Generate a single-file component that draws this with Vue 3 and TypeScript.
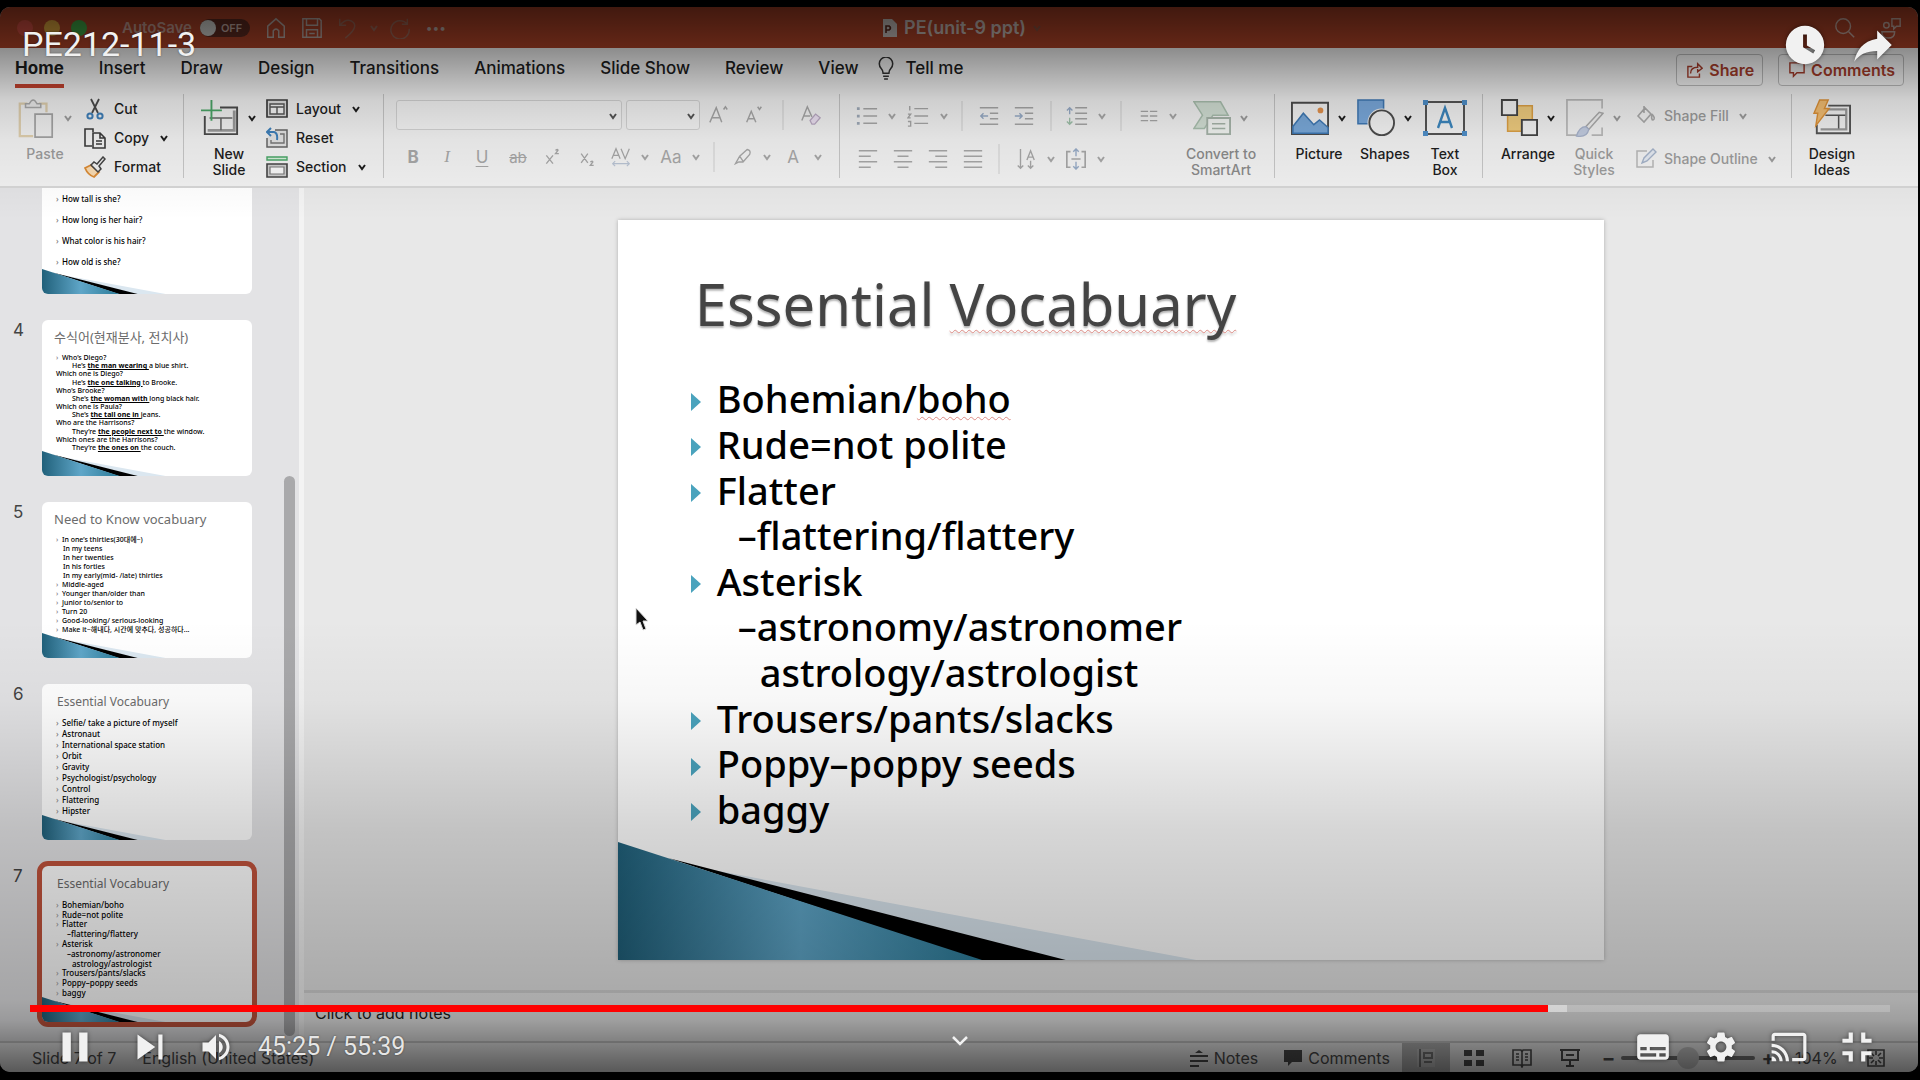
<script setup lang="ts">
import { ref, computed } from 'vue'

interface Cell { icon?: string; text?: string; cls?: string; w: number; label: string }
interface Row { t: string; b?: string; rest?: string; kind?: string }
interface Thumb { n: number; title?: string; size: string; rows: Row[] }

const tabs = ['Home', 'Insert', 'Draw', 'Design', 'Transitions', 'Animations', 'Slide Show', 'Review', 'View']

const fontTop: Cell[] = [
  { icon: 'grow', w: 36, label: 'Increase font size' },
  { icon: 'shrink', w: 34, label: 'Decrease font size' },
  { icon: 'bar', w: 24, label: '' },
  { icon: 'clear', w: 32, label: 'Clear formatting' },
]
const fontBottom: Cell[] = [
  { text: 'B', cls: 'bold', w: 34, label: 'Bold' },
  { text: 'I', cls: 'ital', w: 34, label: 'Italic' },
  { text: 'U', cls: 'under', w: 36, label: 'Underline' },
  { text: 'ab', cls: 'strike', w: 36, label: 'Strikethrough' },
  { icon: 'sup', w: 34, label: 'Superscript' },
  { icon: 'sub', w: 34, label: 'Subscript' },
  { icon: 'av', w: 34, label: 'Character spacing' },
  { icon: 'chev', w: 14, label: 'Spacing options' },
  { text: 'Aa', w: 38, label: 'Change case' },
  { icon: 'chev', w: 12, label: 'Case options' },
  { icon: 'bar', w: 24, label: '' },
  { icon: 'pen', w: 34, label: 'Highlight' },
  { icon: 'chev', w: 14, label: 'Highlight options' },
  { text: 'A', w: 38, label: 'Font color' },
  { icon: 'chev', w: 12, label: 'Color options' },
]
const paraTop: Cell[] = [
  { icon: 'bullets', w: 34, label: 'Bullets' },
  { icon: 'chev', w: 16, label: 'Bullet options' },
  { icon: 'numbers', w: 36, label: 'Numbering' },
  { icon: 'chev', w: 16, label: 'Numbering options' },
  { icon: 'bar', w: 20, label: '' },
  { icon: 'outdent', w: 34, label: 'Decrease indent' },
  { icon: 'indent', w: 36, label: 'Increase indent' },
  { icon: 'bar', w: 18, label: '' },
  { icon: 'spacing', w: 34, label: 'Line spacing' },
  { icon: 'chev', w: 16, label: 'Spacing options' },
  { icon: 'bar', w: 22, label: '' },
  { icon: 'columns', w: 34, label: 'Columns' },
  { icon: 'chev', w: 14, label: 'Column options' },
]
const paraBottom: Cell[] = [
  { icon: 'left', w: 35, label: 'Align left' },
  { icon: 'center', w: 35, label: 'Center' },
  { icon: 'right', w: 35, label: 'Align right' },
  { icon: 'justify', w: 35, label: 'Justify' },
  { icon: 'bar', w: 18, label: '' },
  { icon: 'textdir', w: 36, label: 'Text direction' },
  { icon: 'chev', w: 14, label: 'Direction options' },
  { icon: 'valign', w: 36, label: 'Align text' },
  { icon: 'chev', w: 14, label: 'Align options' },
]

const slideRows: Row[] = [
  { t: 'Bohemian/', b: 'boho' },
  { t: 'Rude=not polite' },
  { t: 'Flatter' },
  { t: '–flattering/flattery', kind: 'sub' },
  { t: 'Asterisk' },
  { t: '–astronomy/astronomer', kind: 'sub' },
  { t: 'astrology/astrologist', kind: 'deep' },
  { t: 'Trousers/pants/slacks' },
  { t: 'Poppy–poppy seeds' },
  { t: 'baggy' },
]

const thumbs: Thumb[] = [
  { n: 3, size: 'open', rows: [{ t: 'How tall is she?' }, { t: 'How long is her hair?' }, { t: 'What color is his hair?' }, { t: 'How old is she?' }] },
  {
    n: 4, title: '수식어(현재분사, 전치사)', size: 'tight', rows: [
      { t: 'Who’s Diego?' },
      { t: 'He’s ', b: 'the man wearing ', rest: 'a blue shirt.', kind: 'deep' },
      { t: 'Which one is Diego?', kind: 'flush' },
      { t: 'He’s ', b: 'the one talking ', rest: 'to Brooke.', kind: 'deep' },
      { t: 'Who’s Brooke?', kind: 'flush' },
      { t: 'She’s ', b: 'the woman with ', rest: 'long black hair.', kind: 'deep' },
      { t: 'Which one is Paula?', kind: 'flush' },
      { t: 'She’s ', b: 'the tall one in ', rest: 'jeans.', kind: 'deep' },
      { t: 'Who are the Harrisons?', kind: 'flush' },
      { t: 'They’re ', b: 'the people next to ', rest: 'the window.', kind: 'deep' },
      { t: 'Which ones are the Harrisons?', kind: 'flush' },
      { t: 'They’re ', b: 'the ones on ', rest: 'the couch.', kind: 'deep' },
    ],
  },
  {
    n: 5, title: 'Need to Know vocabuary', size: 'tight', rows: [
      { t: 'In one’s thirties(30대에~)' },
      { t: 'In my teens', kind: 'sub' },
      { t: 'In her twenties', kind: 'sub' },
      { t: 'In his forties', kind: 'sub' },
      { t: 'In my early(mid- /late) thirties', kind: 'sub' },
      { t: 'Middle-aged' },
      { t: 'Younger than/older than' },
      { t: 'Junior to/senior to' },
      { t: 'Turn 20' },
      { t: 'Good-looking/ serious-looking' },
      { t: 'Make it~해내다, 시간에 맞추다, 성공하다...' },
    ],
  },
  {
    n: 6, title: 'Essential Vocabuary', size: 'roomy', rows: [
      { t: 'Selfie/ take a picture of myself' }, { t: 'Astronaut' }, { t: 'International space station' },
      { t: 'Orbit' }, { t: 'Gravity' }, { t: 'Psychologist/psychology' }, { t: 'Control' }, { t: 'Flattering' }, { t: 'Hipster' },
    ],
  },
  {
    n: 7, title: 'Essential Vocabuary', size: 'roomy',
    rows: slideRows.map(r => ({ t: r.t + (r.b ?? ''), kind: r.kind === 'sub' ? 'dash' : r.kind })),
  },
]

const duration = 3339
const position = ref(2725)
const buffered = 2760
const zoom = ref(104)
const autosave = ref(false)
const current = ref(7)

const clock = (s: number) => `${Math.floor(s / 60)}:${String(s % 60).padStart(2, '0')}`
const track = computed(() => {
  const p = (position.value / duration) * 100
  const b = (buffered / duration) * 100
  return { background: `linear-gradient(90deg, #f00 ${p}%, rgba(255,255,255,.5) ${p}%, rgba(255,255,255,.5) ${b}%, rgba(255,255,255,.2) ${b}%)` }
})
</script>

<template>
  <svg class="defs" aria-hidden="true">
    <defs>
      <linearGradient id="blue" x1="0" x2="1">
        <stop offset="0" stop-color="#20607a" /><stop offset=".5" stop-color="#5fa6c8" /><stop offset="1" stop-color="#2c7b98" />
      </linearGradient>
    </defs>
    <symbol id="swoosh" viewBox="0 0 986 118" preserveAspectRatio="none">
      <path d="M90 27 580 118H440z" fill="#dbe7f0" /><path d="M50 16 449 118H360z" fill="#000" /><path d="M0 0 365 118H0z" fill="url(#blue)" />
    </symbol>
    <symbol id="chev" viewBox="0 0 10 10"><path d="M2 3l3 4 3-4" fill="none" stroke="currentColor" stroke-width="2" /></symbol>
    <symbol id="bar" viewBox="0 0 2 30"><path d="M1 0v30" stroke="#cfcfcf" stroke-width="1" /></symbol>
    <symbol id="grow" viewBox="0 0 24 24"><path d="M2 20 9 4l6 16M4 15h9M17 6l2-3 2 3" fill="none" stroke="currentColor" stroke-width="1.6" /></symbol>
    <symbol id="shrink" viewBox="0 0 24 24"><path d="M4 20 9 8l5 12M6 16h7M16 3l2 3 2-3" fill="none" stroke="currentColor" stroke-width="1.6" /></symbol>
    <symbol id="clear" viewBox="0 0 24 24"><path d="M2 18 8 3l5 11M4 13h7" fill="none" stroke="currentColor" stroke-width="1.6" /><path d="M11 18l6-7 5 4-6 7h-3z" fill="#eadff0" stroke="#b9a9c2" stroke-width="1.4" /></symbol>
    <symbol id="sup" viewBox="0 0 24 24"><path d="M4 10l8 10M12 10 4 20M15 4q3-2 3 0l-3 4h4" fill="none" stroke="currentColor" stroke-width="1.6" /></symbol>
    <symbol id="sub" viewBox="0 0 24 24"><path d="M5 8l8 11M13 8 5 19M16 18q3-2 3 0l-3 4h4" fill="none" stroke="currentColor" stroke-width="1.6" /></symbol>
    <symbol id="av" viewBox="0 0 24 24"><path d="M1 14 6 2l5 12M3 10h6M12 2l5 12 5-12" fill="none" stroke="currentColor" stroke-width="1.5" /><path d="M2 20h20M5 17l-3 3 3 3M19 17l3 3-3 3" fill="none" stroke="#b9c3d3" stroke-width="1.4" /></symbol>
    <symbol id="pen" viewBox="0 0 24 24"><path d="M3 20l5-9L17 3q5 1 3 6l-8 9H7zM8 11l4 6" fill="none" stroke="currentColor" stroke-width="1.6" /></symbol>
    <symbol id="bullets" viewBox="0 0 24 24"><path d="M8 4h15M8 12h15M8 20h15" stroke="currentColor" stroke-width="1.6" /><path d="M1 4h3M1 12h3M1 20h3" stroke="#9faab8" stroke-width="3" /></symbol>
    <symbol id="numbers" viewBox="0 0 24 24"><path d="M8 4h15M8 12h15M8 20h15M3 1v5M1 10h3l-3 4h3M1 18h3v5H1" fill="none" stroke="currentColor" stroke-width="1.5" /></symbol>
    <symbol id="outdent" viewBox="0 0 24 24"><path d="M2 3h20M13 9h9M13 15h9M2 21h20" stroke="currentColor" stroke-width="1.6" /><path d="M11 12H3M6 9l-3 3 3 3" fill="none" stroke="#96aac5" stroke-width="1.5" /></symbol>
    <symbol id="indent" viewBox="0 0 24 24"><path d="M2 3h20M13 9h9M13 15h9M2 21h20" stroke="currentColor" stroke-width="1.6" /><path d="M2 12h8M7 9l3 3-3 3" fill="none" stroke="#96aac5" stroke-width="1.5" /></symbol>
    <symbol id="spacing" viewBox="0 0 24 24"><path d="M10 3h13M10 9h13M10 15h13M10 21h13" stroke="currentColor" stroke-width="1.6" /><path d="M4 10V3M1 6l3-3 3 3" fill="none" stroke="#96aac5" stroke-width="1.5" /><path d="M4 14v7M1 18l3 3 3-3" fill="none" stroke="#9dbfa8" stroke-width="1.5" /></symbol>
    <symbol id="columns" viewBox="0 0 24 24"><path d="M3 7h8M13 7h8M3 12h8M13 12h8M3 17h8M13 17h8" stroke="currentColor" stroke-width="1.5" /></symbol>
    <symbol id="left" viewBox="0 0 24 24"><path d="M2 3h20M2 9h13M2 15h20M2 21h13" stroke="currentColor" stroke-width="1.8" /></symbol>
    <symbol id="center" viewBox="0 0 24 24"><path d="M2 3h20M6 9h12M2 15h20M6 21h12" stroke="currentColor" stroke-width="1.8" /></symbol>
    <symbol id="right" viewBox="0 0 24 24"><path d="M2 3h20M9 9h13M2 15h20M9 21h13" stroke="currentColor" stroke-width="1.8" /></symbol>
    <symbol id="justify" viewBox="0 0 24 24"><path d="M2 3h20M2 9h20M2 15h20M2 21h20" stroke="currentColor" stroke-width="1.8" /></symbol>
    <symbol id="textdir" viewBox="0 0 24 24"><path d="M6 1v21M3 19l3 3 3-3M17 14v8M14 19l3 3 3-3M13 13l4-10 4 10M14 10h6" fill="none" stroke="currentColor" stroke-width="1.5" /></symbol>
    <symbol id="valign" viewBox="0 0 24 24"><path d="M6 4H2v17h4M18 4h4v17h-4M7 12h10" fill="none" stroke="currentColor" stroke-width="1.8" /><path d="M12 1v8M9 4l3-3 3 3M12 15v8M9 20l3 3 3-3" fill="none" stroke="#96aac5" stroke-width="1.5" /></symbol>

    <symbol id="paste" viewBox="0 0 38 42"><path d="M10 6H2v34h14M22 6h8v9" fill="none" stroke="#dfcfae" stroke-width="2.4" /><path d="M8 10V6h4q4-8 8 0h4v4z" fill="#ececec" stroke="#aaa" stroke-width="1.6" /><path d="M18 17h18v24H18z" fill="#efefef" stroke="#a3a3a3" stroke-width="1.8" /></symbol>
    <symbol id="cut" viewBox="0 0 22 22"><path d="M7 1l7 14M15 1 8 15" stroke="#4a4a4a" stroke-width="1.8" /><g fill="none" stroke="#3f7fb8" stroke-width="2"><circle cx="6" cy="18" r="2.6" /><circle cx="16" cy="18" r="2.6" /></g></symbol>
    <symbol id="copy" viewBox="0 0 22 22"><path d="M8 19H1V2h8v3M9 6h7l5 5v10H9zM16 6v5h5M12 14h6M12 17h6" fill="none" stroke="#3a3a3a" stroke-width="1.6" /></symbol>
    <symbol id="brush" viewBox="0 0 22 22"><path d="M1 12l6-3 8 7-5 5q-6-2-9-9z" fill="#f7d9b0" stroke="#d98a35" stroke-width="1.8" /><path d="M7 9l3-3 3 2 6-7 2 2-6 7 2 3-3 3z" fill="#eee" stroke="#444" stroke-width="1.5" /></symbol>
    <symbol id="newslide" viewBox="0 0 40 40"><path d="M20 9h18v28H4V18" fill="none" stroke="#4b4b4b" stroke-width="2" /><path d="M7 33h28V12" fill="none" stroke="#9a9a9a" stroke-width="3" /><path d="M9 20h24M21 20v13" stroke="#666" stroke-width="1.6" /><path d="M11 1v22M0 12h22" stroke="#4aa567" stroke-width="2" /></symbol>
    <symbol id="layout" viewBox="0 0 22 22"><path d="M1 2h20v17H1z" fill="#dedede" stroke="#3d3d3d" stroke-width="1.7" /><path d="M4 6h14v10H4zM4 9h14M11 9v7" fill="#f5f5f5" stroke="#555" stroke-width="1.4" /></symbol>
    <symbol id="reset" viewBox="0 0 22 22"><path d="M9 3h12v17H1V11" fill="#e2e2e2" stroke="#666" stroke-width="1.5" /><path d="M14 7h4v9H5v-3" fill="none" stroke="#777" stroke-width="1.4" /><path d="M5 1 1 5l4 4M1 5h7q4 1 3 8" fill="none" stroke="#3f80ba" stroke-width="2" /></symbol>
    <symbol id="section" viewBox="0 0 22 22"><path d="M1 1h20v3H1z" fill="#d4ecd8" stroke="#4aa567" stroke-width="1.4" /><path d="M1 8h20v13H1z" fill="#ccc" stroke="#444" stroke-width="1.6" /><path d="M4 11h14v7H4z" fill="#f6f6f6" stroke="#777" stroke-width="1.2" /></symbol>
    <symbol id="smart" viewBox="0 0 40 40"><path d="M1 3h28l8 14H21l-9 14H1l9-14z" fill="#d2dfd4" stroke="#a9bfae" stroke-width="1.6" /><path d="M15 20h24v17H15z" fill="#f1f4f1" stroke="#a5b3a8" stroke-width="2" /><path d="M20 26h14M20 31h14" stroke="#a5b3a8" stroke-width="1.6" /></symbol>
    <symbol id="picture" viewBox="0 0 40 40"><path d="M1 4h38v33H1z" fill="#f4f4f4" stroke="#4c4c4c" stroke-width="2" /><path d="M2 29l11-14 11 12 6-5 9 8v6H2z" fill="#79a8d8" stroke="#3e78b3" stroke-width="1.6" /><circle cx="31" cy="12" r="3" fill="#e2914c" /></symbol>
    <symbol id="shapes" viewBox="0 0 40 40"><path d="M1 1h27v25H1z" fill="#7aa9dc" stroke="#3f78b4" stroke-width="1.6" /><circle cx="26" cy="25" r="15" fill="#eee" /><circle cx="26" cy="25" r="13" fill="#f4f4f4" stroke="#4c4c4c" stroke-width="2" /></symbol>
    <symbol id="textbox" viewBox="0 0 44 40"><path d="M3 4h38v32H3z" fill="#f4f4f4" stroke="#555" stroke-width="2" /><path d="M15 30l7-20 7 20M17 24h10" fill="none" stroke="#3c86bd" stroke-width="2.4" /><path d="M0 2h5v5H0zM39 2h5v5h-5zM0 33h5v5H0zM39 33h5v5h-5z" fill="#4f8fc9" /></symbol>
    <symbol id="arrange" viewBox="0 0 40 40"><path d="M8 7h26v27H8z" fill="#eecb7e" stroke="#dca045" stroke-width="1.6" /><path d="M2 1h16v16H2zM23 22h16v16H23z" fill="#f3f3f3" stroke="#444" stroke-width="2" /></symbol>
    <symbol id="quick" viewBox="0 0 40 40"><path d="M38 10V1H1v37h12M38 30v8H27" fill="none" stroke="#b9b9b9" stroke-width="1.8" /><path d="M39 15 24 32l-3-3 14-15z" fill="#eee" stroke="#aaa" stroke-width="1.6" /><path d="M21 29q-7 0-10 10 11 2 13-7z" fill="#c2cce0" stroke="#a8b3cb" stroke-width="1.4" /></symbol>
    <symbol id="ideas" viewBox="0 0 40 40"><path d="M16 7h23v29H4v-9" fill="none" stroke="#555" stroke-width="2" /><path d="M14 11h21v21H8" fill="none" stroke="#999" stroke-width="2.4" /><path d="M13 17h21M27 17v14" stroke="#555" stroke-width="1.6" /><path d="M7 1h9l-4 9h5L3 28l2-13H1z" fill="#f2bd72" stroke="#dc9138" stroke-width="1.5" /></symbol>
    <symbol id="fill" viewBox="0 0 22 22"><path d="M3 11l7-8 6 6-7 8zM9 1v7M17 9q4 5 1 6-2 0-1-6" fill="none" stroke="#aaa" stroke-width="1.6" /></symbol>
    <symbol id="outline" viewBox="0 0 22 22"><path d="M12 3H2v16h16v-7" fill="none" stroke="#b6b6b6" stroke-width="1.5" /><path d="M7 15l2-5 9-9 3 3-9 9z" fill="#e3e8f0" stroke="#a4b2c8" stroke-width="1.4" /></symbol>
  </svg>

  <main class="player">
    <div class="window">
      <header class="titlebar">
        <div class="tb-left">
          <i class="light red"></i><i class="light yellow"></i><i class="light green"></i>
          <label class="autosave"><span>AutoSave</span><input v-model="autosave" type="checkbox" /><span class="toggle"><i></i>OFF</span></label>
          <button class="tb" aria-label="Home"><svg viewBox="0 0 24 24"><path d="M3 10l9-8 9 8v12h-6v-7q-3-4-6 0v7H3z" /></svg></button>
          <button class="tb" aria-label="Save"><svg viewBox="0 0 24 24"><path d="M2 2h18l2 2v18H2zM6 2v7h12V2M6 22v-8h12v8M9 18h6" /></svg></button>
          <button class="tb dim" aria-label="Undo"><svg viewBox="0 0 24 24"><path d="M3 2v7h7M3 9q8-9 15-3 5 6-9 17" /></svg></button>
          <button class="tb thin dim" aria-label="Undo options"><svg class="s10"><use href="#chev" /></svg></button>
          <button class="tb dim" aria-label="Redo"><svg viewBox="0 0 24 24"><path d="M20 2v6h-6M20 8a10 10 0 1 0 2 5" /></svg></button>
          <button class="tb more" aria-label="More">•••</button>
        </div>
        <h1 class="doc">
          <svg viewBox="0 0 16 20"><path d="M1 1h9l5 5v13H1z" fill="#c9c1be" /><path d="M4 15V8h3q3 2 0 4H4" fill="none" stroke="#55251a" stroke-width="1.6" /></svg>
          PE(unit-9 ppt)
          <svg class="s10 faint"><use href="#chev" /></svg>
        </h1>
        <div class="tb-right">
          <button class="tb" aria-label="Search"><svg viewBox="0 0 24 24"><circle cx="10" cy="10" r="8" /><path d="M16 16l6 6" /></svg></button>
          <button class="tb" aria-label="Share status"><svg viewBox="0 0 24 24"><circle cx="7" cy="9" r="3" /><path d="M2 16h14q0 7-7 7t-7-7zM13 2h9v8h-4l-3 3v-3h-2z" /></svg></button>
        </div>
      </header>

      <nav class="tabs">
        <a v-for="t in tabs" :key="t" href="#" :class="{ active: t === 'Home' }">{{ t }}</a>
        <a href="#" class="tell"><svg viewBox="0 0 18 24"><path d="M6 17q0-3-2-5a7 7 0 1 1 10 0q-2 2-2 5zM6 20h6M7 23h4" fill="none" stroke="#333" stroke-width="1.6" /></svg>Tell me</a>
        <span class="grow"></span>
        <button class="pill"><svg viewBox="0 0 18 18"><path d="M6 5H1v12h13v-4M4 13q0-7 8-7V2l5 5-5 4V8" /></svg>Share</button>
        <button class="pill"><svg viewBox="0 0 18 18"><path d="M1 1h16v11h-8l-4 4v-4H1z" /></svg>Comments</button>
      </nav>

      <section class="tools" aria-label="Ribbon">
        <div class="group clip">
          <button class="big off"><span class="pic"><svg class="s38"><use href="#paste" /></svg><svg class="s10"><use href="#chev" /></svg></span>Paste</button>
          <div class="stack">
            <button><svg class="s22"><use href="#cut" /></svg>Cut</button>
            <button><svg class="s22"><use href="#copy" /></svg>Copy<svg class="s10"><use href="#chev" /></svg></button>
            <button><svg class="s22"><use href="#brush" /></svg>Format</button>
          </div>
        </div>
        <div class="group slides">
          <button class="big"><span class="pic"><svg class="s38"><use href="#newslide" /></svg><svg class="s10"><use href="#chev" /></svg></span>New<br />Slide</button>
          <div class="stack">
            <button><svg class="s22"><use href="#layout" /></svg>Layout<svg class="s10"><use href="#chev" /></svg></button>
            <button><svg class="s22"><use href="#reset" /></svg>Reset</button>
            <button><svg class="s22"><use href="#section" /></svg>Section<svg class="s10"><use href="#chev" /></svg></button>
          </div>
        </div>
        <div class="group font">
          <div class="strip">
            <span class="combo wide"><select aria-label="Font"><option></option></select><svg class="s10"><use href="#chev" /></svg></span>
            <span class="combo"><select aria-label="Font size"><option></option></select><svg class="s10"><use href="#chev" /></svg></span>
            <template v-for="(c, i) in fontTop" :key="i">
              <span v-if="c.icon === 'bar'" class="cell" :style="{ width: c.w + 'px' }"><svg class="bar"><use href="#bar" /></svg></span>
              <button v-else class="cell" :aria-label="c.label" :style="{ width: c.w + 'px' }"><svg class="s22"><use :href="'#' + c.icon" /></svg></button>
            </template>
          </div>
          <div class="strip">
            <template v-for="(c, i) in fontBottom" :key="i">
              <span v-if="c.icon === 'bar'" class="cell" :style="{ width: c.w + 'px' }"><svg class="bar"><use href="#bar" /></svg></span>
              <button v-else class="cell" :class="c.cls" :aria-label="c.label" :style="{ width: c.w + 'px' }">
                <template v-if="c.text">{{ c.text }}</template><svg v-else :class="c.icon === 'chev' ? 's10' : 's20'"><use :href="'#' + c.icon" /></svg>
              </button>
            </template>
          </div>
        </div>
        <div class="group para">
          <div class="strips">
            <div v-for="(row, r) in [paraTop, paraBottom]" :key="r" class="strip">
              <template v-for="(c, i) in row" :key="i">
                <span v-if="c.icon === 'bar'" class="cell" :style="{ width: c.w + 'px' }"><svg class="bar"><use href="#bar" /></svg></span>
                <button v-else class="cell" :aria-label="c.label" :style="{ width: c.w + 'px' }"><svg :class="c.icon === 'chev' ? 's10' : 's22'"><use :href="'#' + c.icon" /></svg></button>
              </template>
            </div>
          </div>
          <button class="big off dark"><span class="pic"><svg class="s38"><use href="#smart" /></svg><svg class="s10"><use href="#chev" /></svg></span>Convert to<br />SmartArt</button>
        </div>
        <div class="group insert">
          <button class="big"><span class="pic"><svg class="s38"><use href="#picture" /></svg><svg class="s10"><use href="#chev" /></svg></span>Picture</button>
          <button class="big"><span class="pic"><svg class="s38"><use href="#shapes" /></svg><svg class="s10"><use href="#chev" /></svg></span>Shapes</button>
          <button class="big slim"><span class="pic"><svg class="s42"><use href="#textbox" /></svg></span>Text<br />Box</button>
        </div>
        <div class="group arrange">
          <button class="big"><span class="pic"><svg class="s38"><use href="#arrange" /></svg><svg class="s10"><use href="#chev" /></svg></span>Arrange</button>
          <button class="big off"><span class="pic"><svg class="s38"><use href="#quick" /></svg><svg class="s10"><use href="#chev" /></svg></span>Quick<br />Styles</button>
          <div class="stack two off">
            <button><svg class="s22"><use href="#fill" /></svg>Shape Fill<svg class="s10"><use href="#chev" /></svg></button>
            <button><svg class="s22"><use href="#outline" /></svg>Shape Outline<svg class="s10"><use href="#chev" /></svg></button>
          </div>
        </div>
        <div class="group last">
          <button class="big"><span class="pic"><svg class="s38"><use href="#ideas" /></svg></span>Design<br />Ideas</button>
        </div>
      </section>

      <div class="body">
        <aside class="rail">
          <ol class="thumbs">
            <li v-for="t in thumbs" :key="t.n">
              <span class="num">{{ t.n === 3 ? '' : t.n }}</span>
              <article class="thumb" :class="[t.size, { sel: t.n === current }]" @click="current = t.n">
                <h3 v-if="t.title">{{ t.title }}</h3>
                <ul>
                  <li v-for="(r, i) in t.rows" :key="i" :class="r.kind ?? 'item'">{{ r.t }}<b v-if="r.b">{{ r.b }}</b>{{ r.rest }}</li>
                </ul>
                <svg class="swoosh"><use href="#swoosh" /></svg>
              </article>
            </li>
          </ol>
          <div class="scroll"><i></i></div>
        </aside>
        <div class="pane">
          <div class="stage">
            <article class="slide">
              <h2>Essential <span class="wavy">Vocabuary</span></h2>
              <ul>
                <li v-for="r in slideRows" :key="r.t" :class="r.kind"><svg v-if="!r.kind" viewBox="0 0 10 18"><path d="M0 0l10 9-10 9z" /></svg>{{ r.t }}<span v-if="r.b" class="wavy">{{ r.b }}</span></li>
              </ul>
              <svg class="swoosh"><use href="#swoosh" /></svg>
            </article>
            <svg class="cursor" viewBox="0 0 14 24"><path d="M1 1v17l4-3 3 8 3-1-3-8h5z" fill="#111" stroke="#ddd" stroke-width="1" /></svg>
          </div>
          <div class="notes">Click to add notes</div>
        </div>
      </div>

      <footer class="status">
        <span>Slide 7 of 7</span><span class="lang">English (United States)</span>
        <span class="grow"></span>
        <button class="st"><svg viewBox="0 0 18 18"><path d="M5 4l4-3 4 3zM0 6h18v2H0zM0 11h18v2H0zM0 16h9v2H0z" /></svg>Notes</button>
        <button class="st"><svg viewBox="0 0 18 18"><path d="M0 1h18v12H8l-4 4v-4H0z" /></svg>Comments</button>
        <div class="views">
          <button class="on" aria-label="Normal"><svg viewBox="0 0 20 20"><path d="M1 1h18v18H1z" fill="#c4c4c4" /><path d="M4 1v18M8 5h8v5H8zM8 14h8" fill="none" stroke="#777" stroke-width="2" /></svg></button>
          <button aria-label="Slide sorter"><svg viewBox="0 0 20 20"><path d="M0 2h8v6H0zM12 2h8v6h-8zM0 12h8v6H0zM12 12h8v6h-8z" /></svg></button>
          <button aria-label="Reading view"><svg viewBox="0 0 20 20"><path d="M1 2h8l1 2 1-2h8v15h-8l-1 2-1-2H1zM10 4v14M4 6h3M4 9h3M4 12h3M13 6h3M13 9h3M13 12h3" fill="none" stroke="currentColor" stroke-width="1.6" /></svg></button>
          <button aria-label="Slide show"><svg viewBox="0 0 20 20"><path d="M0 2h20M2 2v10h16V2M6 7h8M10 12v5M6 18h8" fill="none" stroke="currentColor" stroke-width="2" /></svg></button>
        </div>
        <label class="zoom"><span>−</span><input v-model="zoom" type="range" min="8" max="200" aria-label="Zoom" /><span>+</span></label>
        <output>{{ zoom }}%</output>
        <button class="fit" aria-label="Fit slide"><svg viewBox="0 0 18 18"><path d="M1 1h16v16H1zM9 2v4M9 12v4M2 9h4M12 9h4M4 4l3 3M14 4l-3 3M4 14l3-3M14 14l-3-3" fill="none" stroke="currentColor" stroke-width="1.6" /></svg></button>
      </footer>
    </div>

    <div class="shade"></div>

    <div class="top-ui">
      <div class="video-title">PE212-11-3</div>
      <button class="yt" aria-label="Watch later"><svg class="s46" viewBox="0 0 24 24"><path fill-rule="evenodd" d="M12 2a10 10 0 1 0 0 20 10 10 0 0 0 0-20zm-1 4.500h2v5.700l4.300 2.600-1 1.600L11 13.200z" /></svg></button>
      <button class="yt" aria-label="Share"><svg class="s50" viewBox="0 0 24 24"><path d="M14 9V5l7 7-7 7v-4.100c-5 0-8.500 1.600-11 5.100 1-5 4-10 11-11z" /></svg></button>
    </div>

    <div class="bottom-ui">
      <input v-model.number="position" class="seek" type="range" min="0" :max="duration" aria-label="Seek" :style="track" />
      <div class="controls">
        <div class="c-left">
          <button class="yt wide" aria-label="Pause"><svg class="s50" viewBox="0 0 24 24"><path d="M6 19h4V5H6v14zm8-14v14h4V5h-4z" /></svg></button>
          <button class="yt wide" aria-label="Next"><svg class="s50" viewBox="0 0 24 24"><path d="M6 18l8.500-6L6 6v12zM16 6v12h2V6h-2z" /></svg></button>
          <button class="yt vol" aria-label="Mute"><svg class="s36" viewBox="0 0 24 24"><path d="M3 9v6h4l5 5V4L7 9H3zm13.500 3c0-1.770-1.020-3.290-2.500-4.030v8.050c1.480-.73 2.500-2.250 2.500-4.020zM14 3.230v2.060c2.890.86 5 3.540 5 6.710s-2.110 5.850-5 6.710v2.060c4.010-.91 7-4.490 7-8.770s-2.990-7.860-7-8.770z" /></svg></button>
          <span class="time">{{ clock(position) }} / {{ clock(duration) }}</span>
        </div>
        <button class="down" aria-label="More videos"><svg viewBox="0 0 16 10"><path d="M1 1l7 7 7-7" fill="none" stroke="#f1f1f1" stroke-width="2.500" /></svg></button>
        <div class="c-right">
          <button class="yt" aria-label="Subtitles"><svg class="s38" viewBox="0 0 24 24"><path d="M20 4H4c-1.100 0-2 .9-2 2v12c0 1.100.9 2 2 2h16c1.100 0 2-.9 2-2V6c0-1.100-.9-2-2-2zM4 12h4v2H4v-2zm10 6H4v-2h10v2zm6 0h-4v-2h4v2zm0-4H10v-2h10v2z" /></svg></button>
          <button class="yt" aria-label="Settings"><svg class="s36" viewBox="0 0 24 24"><path d="M19.140 12.940c.04-.3.06-.61.06-.94 0-.32-.02-.64-.07-.94l2.030-1.580c.18-.14.23-.41.12-.61l-1.920-3.320c-.12-.22-.37-.29-.59-.22l-2.390.96c-.5-.38-1.030-.7-1.620-.94l-.36-2.540c-.04-.24-.24-.41-.48-.41h-3.840c-.24 0-.43.17-.47.41l-.36 2.540c-.59.24-1.130.57-1.620.94l-2.390-.96c-.22-.08-.47 0-.59.22L2.740 8.870c-.12.21-.08.47.12.61l2.030 1.580c-.05.3-.09.63-.09.94s.02.64.07.94l-2.030 1.580c-.18.14-.23.41-.12.61l1.920 3.320c.12.22.37.29.59.22l2.390-.96c.5.38 1.030.7 1.620.94l.36 2.540c.05.24.24.41.48.41h3.840c.24 0 .44-.17.47-.41l.36-2.540c.59-.24 1.130-.56 1.620-.94l2.390.96c.22.08.47 0 .59-.22l1.920-3.320c.12-.22.07-.47-.12-.61l-2.010-1.580zM12 15.600c-1.980 0-3.600-1.620-3.600-3.600s1.620-3.600 3.600-3.600 3.600 1.620 3.600 3.600-1.620 3.600-3.600 3.600z" /></svg></button>
          <button class="yt" aria-label="Cast"><svg class="s38" viewBox="0 0 24 24"><path d="M1 18v3h3c0-1.660-1.340-3-3-3zm0-4v2c2.760 0 5 2.240 5 5h2c0-3.870-3.130-7-7-7zm0-4v2c4.970 0 9 4.030 9 9h2c0-6.080-4.930-11-11-11zm20-7H3c-1.100 0-2 .9-2 2v3h2V5h18v14h-7v2h7c1.100 0 2-.9 2-2V5c0-1.100-.9-2-2-2z" /></svg></button>
          <button class="yt" aria-label="Exit full screen"><svg class="s50" viewBox="0 0 24 24"><path d="M5 16h3v3h2v-5H5v2zm3-8H5v2h5V5H8v3zm6 11h2v-3h3v-2h-5v5zm2-11V5h-2v5h5V8h-3z" /></svg></button>
        </div>
      </div>
    </div>
  </main>
</template>

<style>
body { margin: 0; background: #000; }
</style>

<style scoped>
* { box-sizing: border-box; }
.defs { position: absolute; width: 0; height: 0; }
svg { display: block; flex: none; }
button { border: 0; padding: 0; margin: 0; background: none; font: inherit; color: inherit; }
a { color: inherit; text-decoration: none; }
ul, ol { list-style: none; margin: 0; padding: 0; }
h1, h2, h3 { margin: 0; font-weight: 400; }
.grow { flex: 1; }
.s10 { width: 10px; height: 10px; }
.s20 { width: 20px; height: 20px; }
.s22 { width: 22px; height: 22px; }
.s36 { width: 36px; height: 36px; }
.s38 { width: 38px; height: 40px; }
.s42 { width: 44px; height: 40px; }
.s46 { width: 46px; height: 46px; }
.s50 { width: 50px; height: 50px; }

.player { position: relative; height: 100vh; padding: 7px 2px 8px 0; background: #000; overflow: hidden; }
.window { display: flex; flex-direction: column; height: 100%; border-radius: 10px; overflow: hidden; background: #f1f1f1; color: #1d1d1d; font-family: Inter, "Noto Sans CJK KR", sans-serif; }

.titlebar { display: grid; grid-template-columns: 1fr auto 1fr; align-items: center; height: 41px; background: #ad4227; color: #b9aaa5; }
.tb-left, .tb-right { display: flex; align-items: center; }
.tb-left { padding-left: 17px; }
.tb-right { justify-content: flex-end; padding-right: 4px; }
.light { width: 16px; height: 16px; margin-right: 11px; border-radius: 50%; }
.red { background: #cf4d41; }
.yellow { background: #d9a23c; }
.green { background: #3fa544; }
.autosave { display: flex; align-items: center; gap: 8px; margin-left: 24px; font-size: 15px; font-weight: 600; color: #c39a8f; }
.autosave input { position: absolute; opacity: 0; width: 1px; height: 1px; margin: 0; }
.toggle { display: flex; align-items: center; gap: 5px; width: 50px; height: 18px; border-radius: 9px; background: #5d2a20; color: #c5aba4; font-size: 11px; }
.toggle i { width: 16px; height: 16px; border-radius: 50%; background: #d4d4d0; }
.tb { display: grid; place-items: center; width: 36px; height: 30px; }
.tb svg:not(.s10) { width: 22px; height: 22px; fill: none; stroke: currentColor; stroke-width: 1.6; }
.tb-left .autosave + .tb { margin-left: 8px; }
.tb.thin { width: 16px; }
.tb.dim { color: #9b6656; }
.tb-right .tb { width: 46px; color: #c4a9a0; }
.more { font-size: 12px; }
.doc { display: flex; align-items: center; gap: 6px; margin-left: 6px; font-size: 18px; font-weight: 600; color: #c9bcb8; }
.doc svg:first-child { width: 16px; height: 20px; }
.faint { color: #86503f; }

.tabs { display: flex; align-items: center; gap: 35px; height: 44px; padding: 0 14px 0 15px; font-size: 17px; font-weight: 500; }
.tabs a { display: flex; align-items: center; height: 36px; border-bottom: 4px solid transparent; }
.tabs a.active { font-weight: 700; border-color: #c5432f; }
.tabs .tell { gap: 10px; margin-left: -16px; }
.tell svg { width: 18px; height: 23px; }
.tabs .grow { margin: 0 -35px; }
.pill { display: flex; align-items: center; gap: 6px; height: 32px; padding: 0 8px 0 10px; border: 1px solid #b9b9b9; border-radius: 4px; background: rgba(255, 255, 255, .1); color: #a43c2b; font-size: 16px; font-weight: 600; }
.pill + .pill { margin-left: -20px; }
.pill svg { width: 16px; height: 16px; fill: none; stroke: currentColor; stroke-width: 1.6; }

.tools { display: flex; height: 96px; padding: 2px 0 10px; border-bottom: 2px solid #d6d6d6; font-size: 14px; font-weight: 500; }
.group { display: flex; flex: none; height: 84px; border-right: 1px solid #c6c6c6; }
.clip { width: 184px; padding-left: 12px; }
.clip .stack { margin-left: 6px; }
.slides { width: 200px; padding-left: 12px; }
.font { width: 456px; flex-direction: column; padding-left: 12px; }
.para { width: 435px; padding-left: 10px; }
.insert { width: 208px; padding-left: 11px; }
.arrange { width: 309px; padding-left: 12px; }
.last { border: 0; padding-left: 7px; }
.big { display: flex; flex: none; flex-direction: column; align-items: center; width: 66px; line-height: 16px; white-space: nowrap; }
.big.slim { width: 54px; }
.pic { display: flex; align-items: center; gap: 8px; height: 48px; margin-bottom: 4px; }
.off, .off .s10 { color: #9b9b9b; }
.off.dark { color: #8a8a8a; }
.stack { display: flex; flex-direction: column; margin-left: 4px; }
.stack button { display: flex; flex: none; align-items: center; gap: 8px; height: 29px; white-space: nowrap; }
.stack .s10 { margin-left: 2px; }
.stack.two { margin-left: 8px; }
.stack.two button { height: 43px; gap: 7px; }
.strips { flex: none; width: 338px; }
.strip { display: flex; align-items: center; height: 43px; color: #a6a6a6; }
.cell { display: grid; place-items: center; flex: none; height: 30px; font-size: 17px; font-weight: 400; }
.bold { font-weight: 700; }
.ital { font-family: "Liberation Serif", serif; font-style: italic; }
.under { text-decoration: underline; text-underline-offset: 3px; }
.strike { text-decoration: line-through; font-size: 15px; }
.bar { width: 2px; height: 30px; }
.combo { position: relative; width: 74px; height: 30px; margin-right: 1px; color: #555; }
.combo.wide { width: 226px; margin-right: 4px; }
.combo select { width: 100%; height: 100%; appearance: none; border: 1px solid #d3d3d3; border-radius: 3px; background: #f4f4f4; }
.combo svg { position: absolute; right: 4px; top: 11px; }

.body { display: flex; flex: 1; min-height: 0; }
.rail { position: relative; display: flex; flex: none; width: 304px; border-right: 5px solid #f3f3f3; background: #e3e3e5; overflow: hidden; }
.thumbs { display: flex; flex-direction: column; gap: 26px; }
.thumbs > li { display: flex; }
.num { width: 42px; padding-left: 13px; font-size: 17px; line-height: 20px; color: #444; }
.thumb { position: relative; width: 210px; height: 156px; border-radius: 6px; background: #fff; font-family: "Noto Sans", "Noto Sans CJK KR", sans-serif; color: #000; overflow: hidden; }
.thumb.sel { outline: 5px solid #c1533c; }
.thumb h3 { height: 34px; padding-left: 12px; font-size: 12px; line-height: 36px; color: #6c6c6c; white-space: nowrap; }
.thumb ul { position: relative; z-index: 1; display: flex; flex-direction: column; height: 98px; font-size: 7px; font-weight: 500; }
.thumb ul li { display: flex; align-items: center; flex: 1; min-height: 0; padding-left: 20px; line-height: 8px; white-space: pre; }
.thumb .item::before { content: "›"; width: 6px; margin-left: -6px; color: #777; }
.thumb b { font-weight: 700; text-decoration: underline; }
.thumb ul .flush { padding-left: 14px; }
.thumb ul .deep { padding-left: 30px; }
.thumb ul .sub { padding-left: 21px; }
.thumb ul .dash { padding-left: 25px; }
.thumb.tight h3 { font-size: 13px; line-height: 34px; }
.thumb.roomy h3 { padding-left: 15px; }
.thumb.roomy ul { font-size: 8px; }
.thumb.open { height: 106px; border-radius: 0 0 6px 6px; }
.thumb.open ul { height: 84px; font-size: 8px; }
.swoosh { position: absolute; left: 0; bottom: 0; width: 100%; height: 16%; }
.thumb .swoosh { height: 25px; }
.scroll { position: absolute; right: 4px; top: 0; bottom: 5px; width: 11px; display: flex; flex-direction: column; justify-content: flex-end; }
.scroll i { height: 66%; border-radius: 6px; background: #a9a9ab; }

.pane { display: flex; flex: 1; flex-direction: column; min-width: 0; background: #e8e8e8; }
.stage { position: relative; display: flex; flex: 1; align-items: center; justify-content: center; min-height: 0; padding-top: 2px; }
.slide { position: relative; width: calc(61% + 2px); aspect-ratio: 4 / 3; padding-top: 44px; background: #fff; box-shadow: 0 0 4px rgba(0, 0, 0, .25); font-family: "Noto Sans", sans-serif; color: #000; }
.slide h2 { padding-left: 77px; font-size: 58px; line-height: 80px; color: #444; text-shadow: 0 2px 2px rgba(0, 0, 0, .3); white-space: nowrap; }
.slide ul { display: flex; flex-direction: column; height: 456px; margin-top: 32px; padding-left: 73px; font-size: 38px; font-weight: 500; }
.slide ul li { display: flex; align-items: center; flex: 1; min-height: 0; line-height: 45px; white-space: nowrap; }
.slide li svg { width: 10px; height: 18px; margin: 6px 16px 0 0; fill: #4aa3bd; }
.slide ul .sub { padding-left: 47px; }
.slide ul .deep { padding-left: 69px; }
.wavy { text-decoration: underline wavy #dd8d86 1px; text-decoration-skip-ink: none; text-underline-offset: 3px; }
.cursor { position: absolute; left: 20px; top: 50%; width: 14px; height: 24px; margin: 18px 0 0 311px; }
.notes { height: 51px; padding: 10px 11px; border-top: 3px solid #d6d6d6; background: #eaeaea; font-size: 16px; line-height: 20px; }

.status { display: flex; align-items: center; height: 31px; padding: 0 33px 0 32px; border-top: 2px solid #c8c8c8; background: #f0f0f0; font-size: 16px; color: #4c4c4c; }
.lang { margin-left: 26px; }
.st { display: flex; align-items: center; gap: 6px; margin-right: 26px; }
.st + .st { margin-right: 12px; }
.st svg { width: 18px; height: 18px; fill: currentColor; }
.views { display: flex; height: 100%; }
.views button { display: grid; place-items: center; width: 48px; }
.views .on { background: #b5b5b5; }
.views svg { width: 20px; height: 20px; fill: currentColor; }
.zoom { display: flex; align-items: center; gap: 6px; margin-left: 8px; font-size: 20px; font-weight: 700; }
.zoom input { appearance: none; width: 134px; height: 4px; margin: 0; border-radius: 2px; background: #777; }
.zoom input::-webkit-slider-thumb { appearance: none; width: 22px; height: 22px; border-radius: 50%; background: #c9c9c9; }
.status output { width: 48px; margin-left: 20px; }
.fit { margin-left: 24px; }
.fit svg { width: 18px; height: 18px; }

.shade { position: absolute; inset: 0; pointer-events: none; background:
  linear-gradient(180deg, rgba(0,0,0,.66) 0, rgba(0,0,0,.42) 48px, rgba(0,0,0,.28) 74px, rgba(0,0,0,.14) 100px, rgba(0,0,0,.06) 140px, transparent 220px),
  linear-gradient(0deg, rgba(0,0,0,.63) 8px, rgba(0,0,0,.47) 35px, rgba(0,0,0,.32) 60px, rgba(0,0,0,.27) 80px, rgba(0,0,0,.24) 130px, rgba(0,0,0,.16) 250px, rgba(0,0,0,.09) 320px, rgba(0,0,0,.03) 380px, transparent 460px); }

.yt { display: grid; place-items: center; width: 68px; height: 50px; }
.yt svg { fill: #f1f1f1; filter: drop-shadow(0 0 2px rgba(0, 0, 0, .5)); }
.top-ui { position: absolute; top: 20px; left: 22px; right: 13px; display: flex; align-items: center; color: #f1f1f1; }
.video-title { flex: 1; font: 400 34px/50px Roboto, sans-serif; margin-top: -2px; text-shadow: 0 0 2px rgba(0, 0, 0, .5); }
.bottom-ui { position: absolute; left: 0; right: 0; bottom: 8px; }
.seek { display: block; appearance: none; width: calc(100% - 60px); height: 7px; margin: 0 30px 10px; }
.seek::-webkit-slider-thumb { appearance: none; width: 0; height: 0; }
.controls { display: grid; grid-template-columns: 1fr auto 1fr; align-items: center; height: 50px; }
.c-left, .c-right { display: flex; align-items: center; }
.c-left { padding-left: 37px; }
.c-right { justify-content: flex-end; padding-right: 29px; }
.yt.wide { width: 75px; }
.yt.vol { width: 58px; }
.time { margin-left: 13px; font: 400 25px/30px Roboto, sans-serif; color: #e6e6e6; text-shadow: 0 0 2px rgba(0, 0, 0, .5); }
.down { margin-bottom: 12px; }
.down svg { width: 16px; height: 10px; }
</style>
